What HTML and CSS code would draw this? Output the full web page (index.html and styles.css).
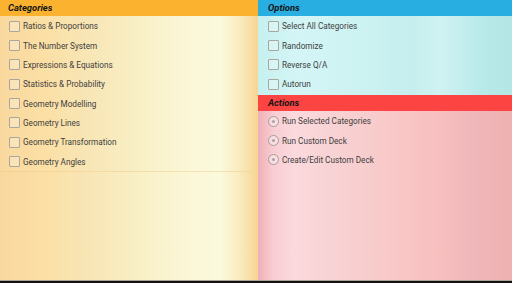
FILE: index.html
```html
<!DOCTYPE html>
<html lang="en">
<head>
    <meta charset="UTF-8">
    <title>Flashcards</title>
    <link rel="stylesheet" href="styles.css">
</head>
<body>
    <div class="main">
        <!-- categories -->
        <div class="panel categories">
            <div class="header header-orange">Categories</div>
            <div class="list list-cats">
                <div class="row"><span class="check"></span>Ratios &amp; Proportions</div>
                <div class="row"><span class="check"></span>The Number System</div>
                <div class="row"><span class="check"></span>Expressions &amp; Equations</div>
                <div class="row"><span class="check"></span>Statistics &amp; Probability</div>
                <div class="row"><span class="check"></span>Geometry Modelling</div>
                <div class="row"><span class="check"></span>Geometry Lines</div>
                <div class="row"><span class="check"></span>Geometry Transformation</div>
                <div class="row"><span class="check"></span>Geometry Angles</div>
            </div>
        </div>

        <div class="side">
            <!-- options -->
            <div class="panel options">
                <div class="header header-blue">Options</div>
                <div class="list list-right">
                    <div class="row"><span class="check"></span>Select All Categories</div>
                    <div class="row"><span class="check"></span>Randomize</div>
                    <div class="row"><span class="check"></span>Reverse Q/A</div>
                    <div class="row"><span class="check"></span>Autorun</div>
                </div>
            </div>

            <!-- actions -->
            <div class="panel actions">
                <div class="header header-red">Actions</div>
                <div class="list list-right">
                    <div class="row"><span class="radio"></span>Run Selected Categories</div>
                    <div class="row"><span class="radio"></span>Run Custom Deck</div>
                    <div class="row"><span class="radio"></span>Create/Edit Custom Deck</div>
                </div>
            </div>
        </div>
    </div>
    <div class="bottom-bar"></div>
</body>
</html>
```

FILE: styles.css
```css
* {
    margin: 0;
    padding: 0;
    box-sizing: border-box;
}

html, body {
    width: 100%;
    height: 100%;
    overflow: hidden;
}

body {
    display: flex;
    flex-direction: column;
    font-family: 'Roboto', 'Liberation Sans', sans-serif;
    color: #404040;
    font-size: 8.2px;
}

.main {
    flex: 1;
    display: flex;
    min-height: 0;
}

.bottom-bar {
    height: 3px;
    background: #111;
    border-top: 1px solid #a8a29a;
}

.panel {
    display: flex;
    flex-direction: column;
}

.categories {
    width: 258px;
    background: linear-gradient(to right,
        #f9d89e 0%,
        #fbe0a6 18%,
        #f8e6b6 35%,
        #f9f0c6 55%,
        #fbf6d6 72%,
        #fbfadd 85%,
        #f9ebbd 93%,
        #f7d594 100%);
}

.side {
    flex: 1;
    display: flex;
    flex-direction: column;
}

.options {
    height: 95px;
    background: linear-gradient(to right,
        #c6f0f0 0%,
        #d4f5f5 15%,
        #cdf2f2 40%,
        #c6eeee 60%,
        #d0f2f2 72%,
        #b9e9e9 88%,
        #b3e6e6 100%);
}

.actions {
    flex: 1;
    background: linear-gradient(to right,
        #efb0b8 0%,
        #f8cdd2 6%,
        #fbd9dd 14%,
        #f8d2d4 30%,
        #f8cccc 45%,
        #f9c4c4 60%,
        #f8bfbf 72%,
        #efb7ba 85%,
        #efb1b2 100%);
}

.header {
    height: 16px;
    line-height: 16px;
    padding-left: 8px;
    font-size: 9.4px;
    font-weight: bold;
    font-style: italic;
    color: #141414;
}

.header-orange {
    background: #fbb32f;
}

.header-blue {
    background: #29aee2;
    padding-left: 10px;
}

.header-red {
    background: #fc4543;
    padding-left: 10px;
}

.list {
    display: flex;
    flex-direction: column;
    padding-top: 0.5px;
}

.list-cats {
    padding-left: 9px;
    margin-right: 8px;
    border-bottom: 1px solid rgba(240, 200, 130, 0.45);
}

.list-right {
    padding-left: 10px;
}

.row {
    height: 19.35px;
    display: flex;
    align-items: center;
    gap: 3px;
    white-space: nowrap;
}

.check {
    width: 11px;
    height: 11px;
    border: 1px solid #aaa69e;
    border-radius: 1px;
    background: rgba(255, 255, 255, 0.25);
    flex-shrink: 0;
}

.radio {
    width: 11px;
    height: 11px;
    border: 1px solid #a29c9c;
    border-radius: 50%;
    background: rgba(255, 255, 255, 0.35);
    flex-shrink: 0;
    display: flex;
    align-items: center;
    justify-content: center;
}

.radio::after {
    content: '';
    width: 3px;
    height: 3px;
    border-radius: 50%;
    background: #a8a2a2;
}
```
